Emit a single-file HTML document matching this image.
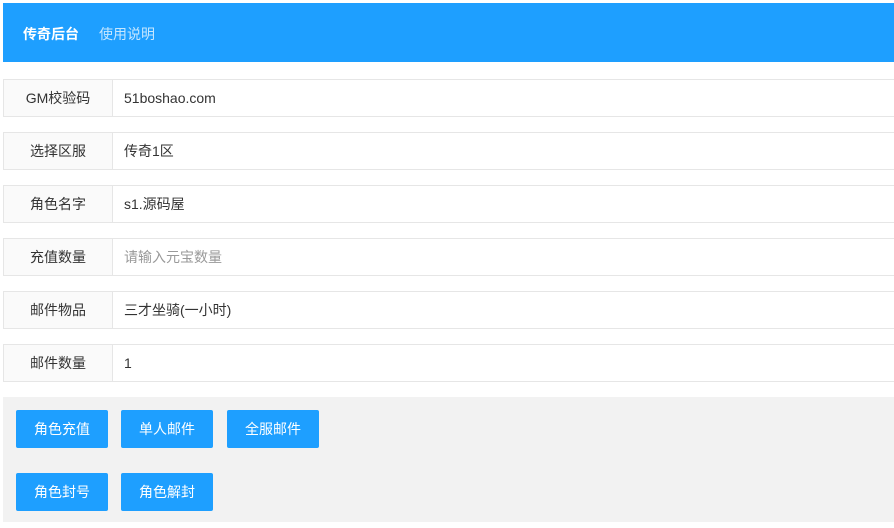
<!DOCTYPE html>
<html><head><meta charset="utf-8"><style>
body{margin:0;background:#fff;font-family:"Liberation Sans","Noto Sans CJK SC",sans-serif;font-size:14px;color:#333;width:894px;height:528px;overflow:hidden;position:relative}
.hd{position:absolute;left:3px;top:3px;width:891px;height:59px;background:#1E9FFF}
.hd span{position:absolute;top:21px;font-size:14px}
.row{position:absolute;left:3px;width:891px;height:36px;border:1px solid #e6e6e6;border-right:none;background:#fff}
.lb{position:absolute;left:0;top:0;width:108px;height:36px;background:#fafafa;border-right:1px solid #e6e6e6;text-align:center;line-height:36px}
.v{position:absolute;left:120px;top:0;line-height:36px}
.pn{position:absolute;left:3px;top:397px;width:891px;height:125px;background:#f2f2f2}
.b{position:absolute;width:92px;height:38px;background:#1E9FFF;color:#fff;text-align:center;line-height:38px;border-radius:2px}
</style></head><body>
<div class="hd"><span style="left:20px;color:#fff;font-weight:bold">传奇后台</span><span style="left:96px;color:rgba(255,255,255,.75)">使用说明</span></div>
<div class="row" style="top:79px"><div class="lb">GM校验码</div><div class="v">51boshao.com</div></div>
<div class="row" style="top:132px"><div class="lb">选择区服</div><div class="v">传奇1区</div></div>
<div class="row" style="top:185px"><div class="lb">角色名字</div><div class="v">s1.源码屋</div></div>
<div class="row" style="top:238px"><div class="lb">充值数量</div><div class="v" style="color:#999">请输入元宝数量</div></div>
<div class="row" style="top:291px"><div class="lb">邮件物品</div><div class="v">三才坐骑(一小时)</div></div>
<div class="row" style="top:344px"><div class="lb">邮件数量</div><div class="v">1</div></div>
<div class="pn"></div>
<div class="b" style="left:16px;top:410px">角色充值</div>
<div class="b" style="left:121px;top:410px">单人邮件</div>
<div class="b" style="left:227px;top:410px">全服邮件</div>
<div class="b" style="left:16px;top:473px">角色封号</div>
<div class="b" style="left:121px;top:473px">角色解封</div>
</body></html>
